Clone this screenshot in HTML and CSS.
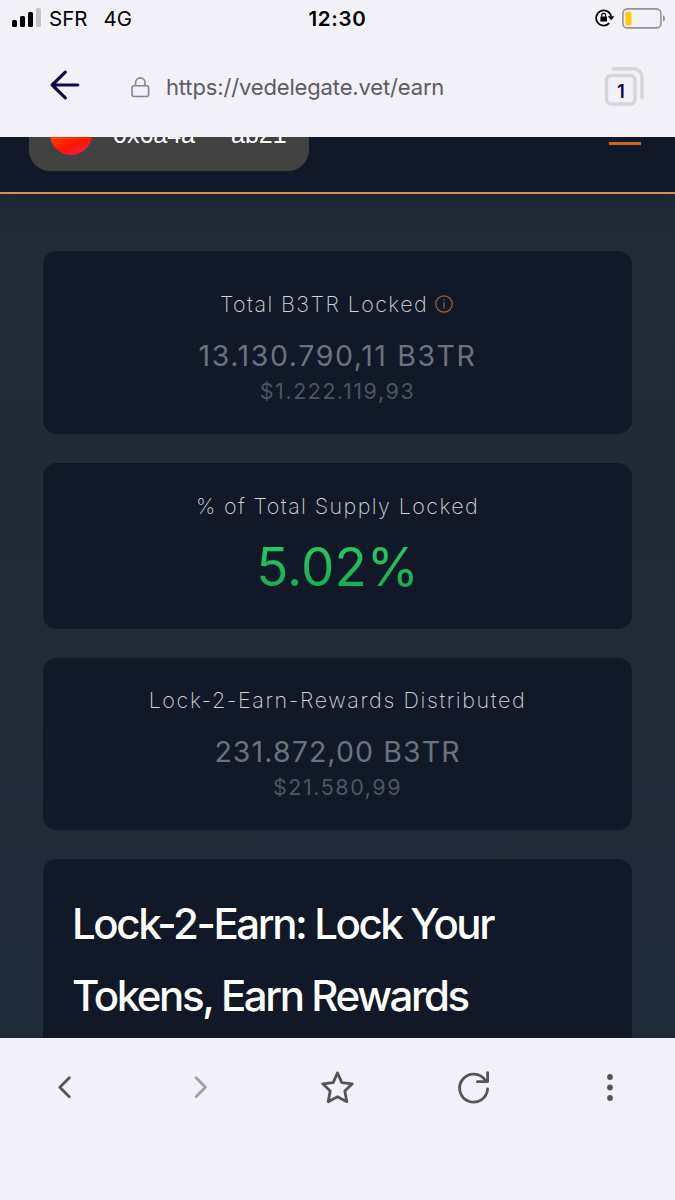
FILE: index.html
```html
<!DOCTYPE html>
<html lang="en">
<head>
    <meta charset="UTF-8">
    <meta name="viewport" content="width=device-width, initial-scale=1.0">
    <title>veDelegate - Earn</title>
    <link rel="stylesheet" href="styles.css">
</head>
<body>

    <!-- Status bar -->
    <div class="status-bar">
        <div class="status-left">
            <svg class="signal" width="30" height="19" viewBox="0 0 30 19">
                <rect x="0" y="12" width="5" height="7" rx="1.5"/>
                <rect x="8" y="8" width="5" height="11" rx="1.5"/>
                <rect x="16" y="4" width="5" height="15" rx="1.5"/>
                <rect x="24" y="0" width="5" height="19" rx="1.5" fill="#c4c4c8"/>
            </svg>
            <span class="carrier">SFR</span>
            <span class="network">4G</span>
        </div>
        <div class="clock">12:30</div>
        <div class="status-right">
            <svg width="20" height="18" viewBox="0 0 20 18">
                <path d="M14.3 14.2A7.6 7.6 0 1 1 16.2 7.6" fill="none" stroke="#000" stroke-width="1.7"/>
                <path d="M12.7 7.2h6.8l-3.3 4z"/>
                <rect x="5.4" y="7.4" width="6.6" height="5.2" rx="0.7"/>
                <path d="M6.8 7.8V6.3a1.9 1.9 0 0 1 3.8 0v1.5" fill="none" stroke="#000" stroke-width="1.2"/>
            </svg>
            <svg class="battery" width="44" height="21" viewBox="0 0 44 21">
                <rect x="0.9" y="0.9" width="38" height="19" rx="4.5" fill="none" stroke="#939299" stroke-width="1.6"/>
                <rect x="3.4" y="3.5" width="6" height="14" rx="2.6" fill="#fc0"/>
                <path d="M41 7.3q2 .8 2 3.2t-2 3.2z" fill="#939299"/>
            </svg>
        </div>
    </div>

    <!-- Address bar -->
    <div class="address-bar">
        <svg class="back" width="30" height="30" viewBox="0 0 30 30">
            <path d="M15.3 2.2L2.2 15l13.1 12.8M3 15h24.8"/>
        </svg>
        <svg class="lock" width="19" height="21" viewBox="0 0 19 21">
            <rect x="1" y="8.7" width="16.6" height="10.8" rx="2"/>
            <path d="M4.6 8.5V5.6a4.7 4.7 0 0 1 9.4 0v2.9"/>
        </svg>
        <div class="url">https://vedelegate.vet/earn</div>
        <div class="tabs">
            <svg width="40" height="40" viewBox="0 0 40 40">
                <rect x="2.5" y="8.5" width="28.5" height="28.5" rx="5"/>
                <path d="M9.5 1.8H29.5a8.5 8.5 0 0 1 8.5 8.5v20.5"/>
            </svg>
            <span class="tab-count">1</span>
        </div>
    </div>

    <!-- Page content -->
    <div class="page">
        <div class="navbar">
            <div class="wallet">
                <span class="avatar"></span>
                <span class="wallet-address"><span>0x6a4a</span><span>ab21</span></span>
            </div>
            <span class="menu-line"></span>
        </div>

        <div class="cards">
            <div class="card card-locked">
                <div class="label">Total B3TR Locked
                    <svg class="info" width="18" height="18" viewBox="0 0 18 18">
                        <circle cx="9" cy="9" r="8.2"/>
                        <path d="M9 7.5v6M9 4.2v1.4"/>
                    </svg>
                </div>
                <div class="amount">13.130.790,11 B3TR</div>
                <div class="usd">$1.222.119,93</div>
            </div>
            <div class="card card-supply">
                <div class="label">% of Total Supply Locked</div>
                <div class="percent">5.02%</div>
            </div>
            <div class="card card-rewards">
                <div class="label">Lock-2-Earn-Rewards Distributed</div>
                <div class="amount">231.872,00 B3TR</div>
                <div class="usd">$21.580,99</div>
            </div>
            <div class="card card-intro">
                <h1>Lock-2-Earn: Lock Your<br>Tokens, Earn Rewards</h1>
            </div>
        </div>
    </div>

    <!-- Browser toolbar -->
    <div class="toolbar">
        <svg width="34" height="34" viewBox="0 0 34 34"><path d="M21.3 7.8L11.8 17.2l9.5 9.5"/></svg>
        <svg class="disabled" width="34" height="34" viewBox="0 0 34 34"><path d="M12 7.8l9.5 9.4-9.5 9.5"/></svg>
        <svg width="34" height="34" viewBox="0 0 34 34"><path d="M16.5 2.9l4.3 9.7 10.5 1.2-7.5 7.3 2 10.6-9.3-4.9-9.3 4.9 2-10.6-7.5-7.3 10.5-1.2z"/></svg>
        <svg width="34" height="34" viewBox="0 0 34 34"><path d="M30.6 18.8A14 14 0 1 1 28.3 10.4M30.6 2.6v9.1H20.4"/></svg>
        <svg class="more" width="34" height="34" viewBox="0 0 34 34">
            <circle cx="17" cy="7" r="2.9"/>
            <circle cx="17" cy="17.5" r="2.9"/>
            <circle cx="17" cy="28" r="2.9"/>
        </svg>
    </div>

</body>
</html>
```
FILE: styles.css
```css
body {
    margin: 0;
    height: 1200px;
    display: flex;
    flex-direction: column;
    overflow: hidden;
    background-color: #f2f1f7;
    font-family: Inter, "Liberation Sans", sans-serif;
}
svg {
    display: block;
    flex: none;
}

/* Status bar */
.status-bar {
    display: grid;
    grid-template-columns: 1fr auto 1fr;
    align-items: center;
    height: 37px;
    padding: 0 9px 0 12px;
    color: #000;
    font-size: 20.5px;
    line-height: 37px;
}
.status-left, .status-right {
    display: flex;
    align-items: center;
}
.status-right {
    justify-content: flex-end;
    gap: 7px;
    padding-bottom: 1px;
}
.signal {
    margin-right: 7px;
    margin-bottom: 2px;
}
.network {
    margin-left: 16px;
}
.clock {
    margin-right: 3px;
    font-weight: 600;
    letter-spacing: 0.7px;
}

/* Address bar */
.address-bar {
    display: flex;
    align-items: center;
    height: 100px;
    padding: 0 31px 0 50px;
}
.back {
    fill: none;
    stroke: #120849;
    stroke-width: 3.2;
    stroke-linecap: round;
    stroke-linejoin: round;
    margin: 0 51px 4px 0;
}
.lock {
    fill: none;
    stroke: #85858f;
    stroke-width: 1.6;
    margin-right: 16px;
}
.url {
    flex: 1;
    color: #5b5b66;
    font-size: 22px;
    letter-spacing: -0.15px;
}
.tabs {
    display: grid;
}
.tabs svg {
    grid-area: 1 / 1;
    fill: none;
    stroke: #d5d5da;
    stroke-width: 3.4;
    stroke-linecap: round;
}
.tab-count {
    grid-area: 1 / 1;
    width: 34px;
    padding-top: 13px;
    text-align: center;
    color: #120849;
    font-size: 18.5px;
    line-height: 22px;
    font-weight: 600;
}

/* Page content */
.page {
    height: 901px;
    overflow: hidden;
    background: linear-gradient(#1f2835, #212a37 12%, #202b39);
}
.navbar {
    display: flex;
    align-items: flex-end;
    justify-content: space-between;
    box-sizing: border-box;
    height: 57px;
    padding: 0 34px 21px 29px;
    overflow: hidden;
    background-color: #111827;
    border-bottom: 2px solid #d99053;
    box-shadow: 0 4px 16px rgba(0, 0, 0, 0.15);
}
.wallet {
    display: flex;
    align-items: center;
    box-sizing: border-box;
    width: 280px;
    height: 75px;
    padding-left: 21px;
    border-radius: 21px;
    background-color: #424242;
}
.avatar {
    width: 42px;
    height: 42px;
    margin-right: 21px;
    border-radius: 50%;
    background: linear-gradient(160deg, #ff3b00 50%, #ff1500 70%, #ff1744 90%);
}
.wallet-address {
    display: flex;
    gap: 36px;
    padding-top: 2px;
    color: #fff;
    font-family: "Liberation Sans", Arial, sans-serif;
    font-size: 25px;
}
.menu-line {
    width: 32px;
    height: 3px;
    margin-bottom: 26px;
    background-color: #cf6427;
}
.cards {
    display: flex;
    flex-direction: column;
    gap: 29px;
    padding: 57px 43px 0;
}
.card {
    box-sizing: border-box;
    flex: none;
    border-radius: 14px;
    background-color: #111827;
    text-align: center;
}
.card-locked {
    height: 183px;
    padding-top: 35px;
}
.card-supply {
    height: 166px;
    padding-top: 25px;
}
.card-rewards {
    height: 172px;
    padding-top: 24px;
}
.card-intro {
    height: 300px;
    padding: 29px 29px;
    text-align: left;
}
.label {
    display: flex;
    justify-content: center;
    align-items: center;
    gap: 7px;
    color: #d1d5db;
    font-size: 21.5px;
    font-weight: 200;
    line-height: 36px;
    letter-spacing: 1.4px;
}
.card-locked .label {
    padding-right: 2px;
}
.card-rewards .label {
    letter-spacing: 1.6px;
}
.info {
    fill: none;
    stroke: #a35f3b;
    stroke-width: 1.2;
}
.amount {
    margin-top: 14px;
    color: #6b7280;
    font-size: 28.5px;
    line-height: 40px;
    letter-spacing: 1.6px;
}
.card-rewards .amount {
    letter-spacing: 1.1px;
}
.usd {
    color: #4b5563;
    font-size: 21.5px;
    line-height: 30px;
    letter-spacing: 1.55px;
}
.percent {
    margin-top: 11px;
    font-size: 53px;
    font-weight: 400;
    line-height: 64px;
    letter-spacing: 0;
    color: transparent;
    background: linear-gradient(#22c55e, #22c55e 30%, #16a34a);
    -webkit-background-clip: text;
    background-clip: text;
}
h1 {
    margin: 0;
    color: #fff;
    font-size: 42px;
    font-weight: 500;
    line-height: 72px;
    letter-spacing: -2.4px;
}

/* Browser toolbar */
.toolbar {
    display: flex;
    justify-content: space-between;
    padding: 32px 48px 0;
}
.toolbar svg {
    fill: none;
    stroke: #515560;
    stroke-width: 2.8;
    stroke-linecap: round;
    stroke-linejoin: round;
}
.toolbar .disabled {
    stroke: #a0a0a8;
}
.toolbar .more {
    fill: #515560;
    stroke: none;
}
```
